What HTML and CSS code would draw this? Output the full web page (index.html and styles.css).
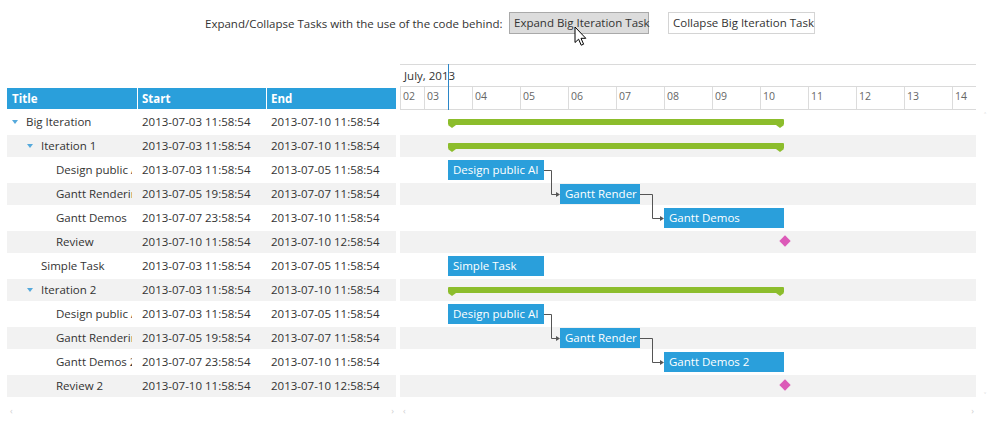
FILE: index.html
```html
<!DOCTYPE html>
<html>
<head>
<meta charset="utf-8">
<link rel="stylesheet" href="styles.css">
</head>
<body>
<div class="toolbar">
  <span class="label">Expand/Collapse Tasks with the use of the code behind:</span>
  <button class="btn btn-active">Expand Big Iteration Task</button>
  <button class="btn btn-plain">Collapse Big Iteration Task</button>
</div>

<div class="main">
  <div class="grid">
    <div class="grid-head">
      <div class="hc hc-title">Title</div>
      <div class="hc hc-start">Start</div>
      <div class="hc hc-end">End</div>
    </div>
    <div class="grid-body">
      <div class="grid-row">
        <div class="c c-title"><span class="ind l0"></span><span class="exp"><i class="tri"></i></span><span class="t">Big Iteration</span></div>
        <div class="c c-start">2013-07-03 11:58:54</div><div class="c c-end">2013-07-10 11:58:54</div>
      </div>
      <div class="grid-row alt">
        <div class="c c-title"><span class="ind l1"></span><span class="exp"><i class="tri"></i></span><span class="t">Iteration 1</span></div>
        <div class="c c-start">2013-07-03 11:58:54</div><div class="c c-end">2013-07-10 11:58:54</div>
      </div>
      <div class="grid-row">
        <div class="c c-title"><span class="ind l2"></span><span class="exp"></span><span class="t">Design public API</span></div>
        <div class="c c-start">2013-07-03 11:58:54</div><div class="c c-end">2013-07-05 11:58:54</div>
      </div>
      <div class="grid-row alt">
        <div class="c c-title"><span class="ind l2"></span><span class="exp"></span><span class="t">Gantt Rendering</span></div>
        <div class="c c-start">2013-07-05 19:58:54</div><div class="c c-end">2013-07-07 11:58:54</div>
      </div>
      <div class="grid-row">
        <div class="c c-title"><span class="ind l2"></span><span class="exp"></span><span class="t">Gantt Demos</span></div>
        <div class="c c-start">2013-07-07 23:58:54</div><div class="c c-end">2013-07-10 11:58:54</div>
      </div>
      <div class="grid-row alt">
        <div class="c c-title"><span class="ind l2"></span><span class="exp"></span><span class="t">Review</span></div>
        <div class="c c-start">2013-07-10 11:58:54</div><div class="c c-end">2013-07-10 12:58:54</div>
      </div>
      <div class="grid-row">
        <div class="c c-title"><span class="ind l1"></span><span class="exp"></span><span class="t">Simple Task</span></div>
        <div class="c c-start">2013-07-03 11:58:54</div><div class="c c-end">2013-07-05 11:58:54</div>
      </div>
      <div class="grid-row alt">
        <div class="c c-title"><span class="ind l1"></span><span class="exp"><i class="tri"></i></span><span class="t">Iteration 2</span></div>
        <div class="c c-start">2013-07-03 11:58:54</div><div class="c c-end">2013-07-10 11:58:54</div>
      </div>
      <div class="grid-row">
        <div class="c c-title"><span class="ind l2"></span><span class="exp"></span><span class="t">Design public API 2</span></div>
        <div class="c c-start">2013-07-03 11:58:54</div><div class="c c-end">2013-07-05 11:58:54</div>
      </div>
      <div class="grid-row alt">
        <div class="c c-title"><span class="ind l2"></span><span class="exp"></span><span class="t">Gantt Rendering 2</span></div>
        <div class="c c-start">2013-07-05 19:58:54</div><div class="c c-end">2013-07-07 11:58:54</div>
      </div>
      <div class="grid-row">
        <div class="c c-title"><span class="ind l2"></span><span class="exp"></span><span class="t">Gantt Demos 2</span></div>
        <div class="c c-start">2013-07-07 23:58:54</div><div class="c c-end">2013-07-10 11:58:54</div>
      </div>
      <div class="grid-row alt">
        <div class="c c-title"><span class="ind l2"></span><span class="exp"></span><span class="t">Review 2</span></div>
        <div class="c c-start">2013-07-10 11:58:54</div><div class="c c-end">2013-07-10 12:58:54</div>
      </div>
    </div>
    <div class="hscroll"><span class="mk">&#8249;</span><span class="mk">&#8250;</span></div>
  </div>

  <div class="gantt">
    <div class="tl-head">
      <div class="month">July, 2013</div>
      <div class="days">
        <div class="day half">02</div>
        <div class="day">03</div>
        <div class="day">04</div>
        <div class="day">05</div>
        <div class="day">06</div>
        <div class="day">07</div>
        <div class="day">08</div>
        <div class="day">09</div>
        <div class="day">10</div>
        <div class="day">11</div>
        <div class="day">12</div>
        <div class="day">13</div>
        <div class="day">14</div>
      </div>
      <div class="today"></div>
    </div>
    <div class="tl-body">
      <div class="g-row"><div class="summary" style="left:48px;width:336px"></div></div>
      <div class="g-row alt"><div class="summary" style="left:48px;width:336px"></div></div>
      <div class="g-row"><div class="bar" style="left:48px;width:96px">Design public AI</div></div>
      <div class="g-row alt"><div class="bar" style="left:160px;width:80px">Gantt Render</div></div>
      <div class="g-row"><div class="bar" style="left:264px;width:120px">Gantt Demos</div></div>
      <div class="g-row alt"><div class="ms" style="left:385px"></div></div>
      <div class="g-row"><div class="bar" style="left:48px;width:96px">Simple Task</div></div>
      <div class="g-row alt"><div class="summary" style="left:48px;width:336px"></div></div>
      <div class="g-row"><div class="bar" style="left:48px;width:96px">Design public AI</div></div>
      <div class="g-row alt"><div class="bar" style="left:160px;width:80px">Gantt Render</div></div>
      <div class="g-row"><div class="bar" style="left:264px;width:120px">Gantt Demos 2</div></div>
      <div class="g-row alt"><div class="ms" style="left:385px"></div></div>

      <svg class="deps" width="576" height="288" viewBox="0 0 576 288">
        <g fill="none" stroke="#555" stroke-width="1">
          <path d="M144 60.5H151.5V84.5H157"/>
          <path d="M240 84.5H252.5V108.5H261"/>
          <path d="M144 204.5H151.5V228.5H157"/>
          <path d="M240 228.5H252.5V252.5H261"/>
        </g>
        <g fill="#555">
          <path d="M156 82L160 84.5L156 87Z"/>
          <path d="M260 106L264 108.5L260 111Z"/>
          <path d="M156 226L160 228.5L156 231Z"/>
          <path d="M260 250L264 252.5L260 255Z"/>
        </g>
      </svg>
    </div>
    <div class="hscroll"><span class="mk">&#8249;</span><span class="mk">&#8250;</span></div>
  </div>

  <div class="vscroll"><span class="mk">&#708;</span><span class="mk">&#709;</span></div>
</div>

<svg class="cursor" width="14" height="21" viewBox="0 0 14 21">
  <path d="M1 1V16.5L4.6 13.2L7.2 19.2L9.6 18.2L7 12.3H11.8Z" fill="#fff" stroke="#000" stroke-width="1" stroke-linejoin="round"/>
</svg>
</body>
</html>
```

FILE: styles.css
```css
html, body {
  margin: 0;
  padding: 0;
}
body {
  width: 1000px;
  height: 430px;
  overflow: hidden;
  position: relative;
  background: #fff;
  color: #333;
  font-family: "Open Sans", "Noto Sans", sans-serif;
  font-size: 11.5px;
}

/* ---------- toolbar ---------- */
.toolbar {
  display: flex;
  align-items: center;
  height: 22px;
  padding: 12px 0 0 205px;
}
.label {
  width: 304px;
  white-space: nowrap;
  color: #333;
}
.btn {
  box-sizing: border-box;
  height: 22px;
  margin: 0;
  padding: 0 0 1px 4px;
  font: inherit;
  color: #333;
  text-align: left;
  white-space: nowrap;
  border: 1px solid #d4d4d4;
  background: #fff;
}
.btn-active {
  width: 140px;
  margin-right: 19px;
  background: #dcdcdc;
  border-color: #a9a9a9;
}
.btn-plain {
  width: 147px;
}

/* ---------- main layout ---------- */
.main {
  display: flex;
  margin-top: 30px;
}
.grid {
  width: 389px;
  margin-left: 7px;
  padding-top: 24px;
}
.gantt {
  width: 576px;
  margin-left: 4px;
  position: relative;
  overflow: hidden;
}

/* ---------- grid ---------- */
.grid-head {
  display: flex;
  height: 21px;
  border-bottom: 1px solid #fff;
  background: #2a9fdb;
  color: #fff;
  font-weight: 700;
  line-height: 21px;
}
.hc {
  box-sizing: border-box;
  padding-left: 4px;
  border-right: 1px solid #fff;
}
.hc-title { width: 131px; padding-left: 5px; }
.hc-start { width: 129px; }
.hc-end { width: 129px; border-right: 0; }

.grid-row {
  display: flex;
  height: 22px;
  border-top: 1px solid #fff;
  border-bottom: 1px solid #fff;
  line-height: 22px;
  white-space: nowrap;
}
.alt { background: #f2f2f2; }
.c {
  box-sizing: border-box;
  overflow: hidden;
}
.c-title {
  width: 131px;
  display: flex;
  padding: 0 6px 0 3px;
}
.c-start { width: 129px; padding-left: 4px; }
.c-end { width: 129px; padding-left: 4px; }
.ind { flex: none; }
.ind.l0 { width: 0; }
.ind.l1 { width: 15px; }
.ind.l2 { width: 30px; }
.exp {
  flex: none;
  width: 16px;
  position: relative;
}
.tri {
  position: absolute;
  left: 2px;
  top: 9px;
  width: 0;
  height: 0;
  border-left: 3px solid transparent;
  border-right: 3px solid transparent;
  border-top: 4px solid #55a9dc;
}
.t {
  flex: 1;
  min-width: 0;
  overflow: hidden;
}

/* ---------- timeline head ---------- */
.tl-head {
  position: relative;
  border-top: 1px solid #dadada;
}
.month {
  height: 21px;
  line-height: 21px;
  padding-left: 4px;
  border-bottom: 1px solid #dadada;
  color: #333;
}
.days {
  display: flex;
  height: 22px;
  border-bottom: 1px solid #dadada;
}
.day {
  flex: 0 0 48px;
  box-sizing: border-box;
  border-left: 1px solid #dcdcdc;
  padding: 3px 0 0 2px;
  font-size: 10.5px;
  line-height: 12px;
  color: #666;
}
.day.half { flex-basis: 24px; }
.today {
  position: absolute;
  left: 48px;
  top: -2px;
  width: 1px;
  height: 47px;
  background: #2b86c8;
}

/* ---------- timeline body ---------- */
.tl-body {
  position: relative;
}
.g-row {
  position: relative;
  height: 22px;
  border-top: 1px solid #fff;
  border-bottom: 1px solid #fff;
}
.bar {
  position: absolute;
  top: 1px;
  height: 20px;
  box-sizing: border-box;
  padding-left: 5px;
  background: #2a9fdb;
  color: #fff;
  line-height: 19px;
  white-space: nowrap;
  overflow: hidden;
}
.summary {
  position: absolute;
  top: 8px;
  height: 6px;
  background: #8cbd2c;
  border-radius: 1px;
}
.summary::before,
.summary::after {
  content: "";
  position: absolute;
  top: 6px;
  width: 0;
  height: 0;
  border-left: 4px solid transparent;
  border-right: 4px solid transparent;
  border-top: 3px solid #8cbd2c;
}
.summary::before { left: 0; }
.summary::after { right: 0; }
.ms {
  position: absolute;
  top: 6px;
  width: 8px;
  height: 8px;
  margin-left: -4px;
  background: #dc5ab8;
  transform: rotate(45deg);
}
.deps {
  position: absolute;
  left: 0;
  top: 0;
  pointer-events: none;
}

/* ---------- scroll decorations ---------- */
.hscroll {
  display: flex;
  justify-content: space-between;
  height: 20px;
  padding: 8px 2px 0 3px;
  font-size: 9px;
  line-height: 10px;
  color: #d0d0d0;
}
.vscroll {
  display: flex;
  flex-direction: column;
  justify-content: space-between;
  width: 10px;
  margin-left: 8px;
  padding: 48px 0 26px;
  font-size: 8px;
  line-height: 8px;
  color: #d6d6d6;
}
.mk { display: block; }

/* ---------- mouse pointer over the button ---------- */
.cursor {
  position: absolute;
  left: 574px;
  top: 26px;
}
```
